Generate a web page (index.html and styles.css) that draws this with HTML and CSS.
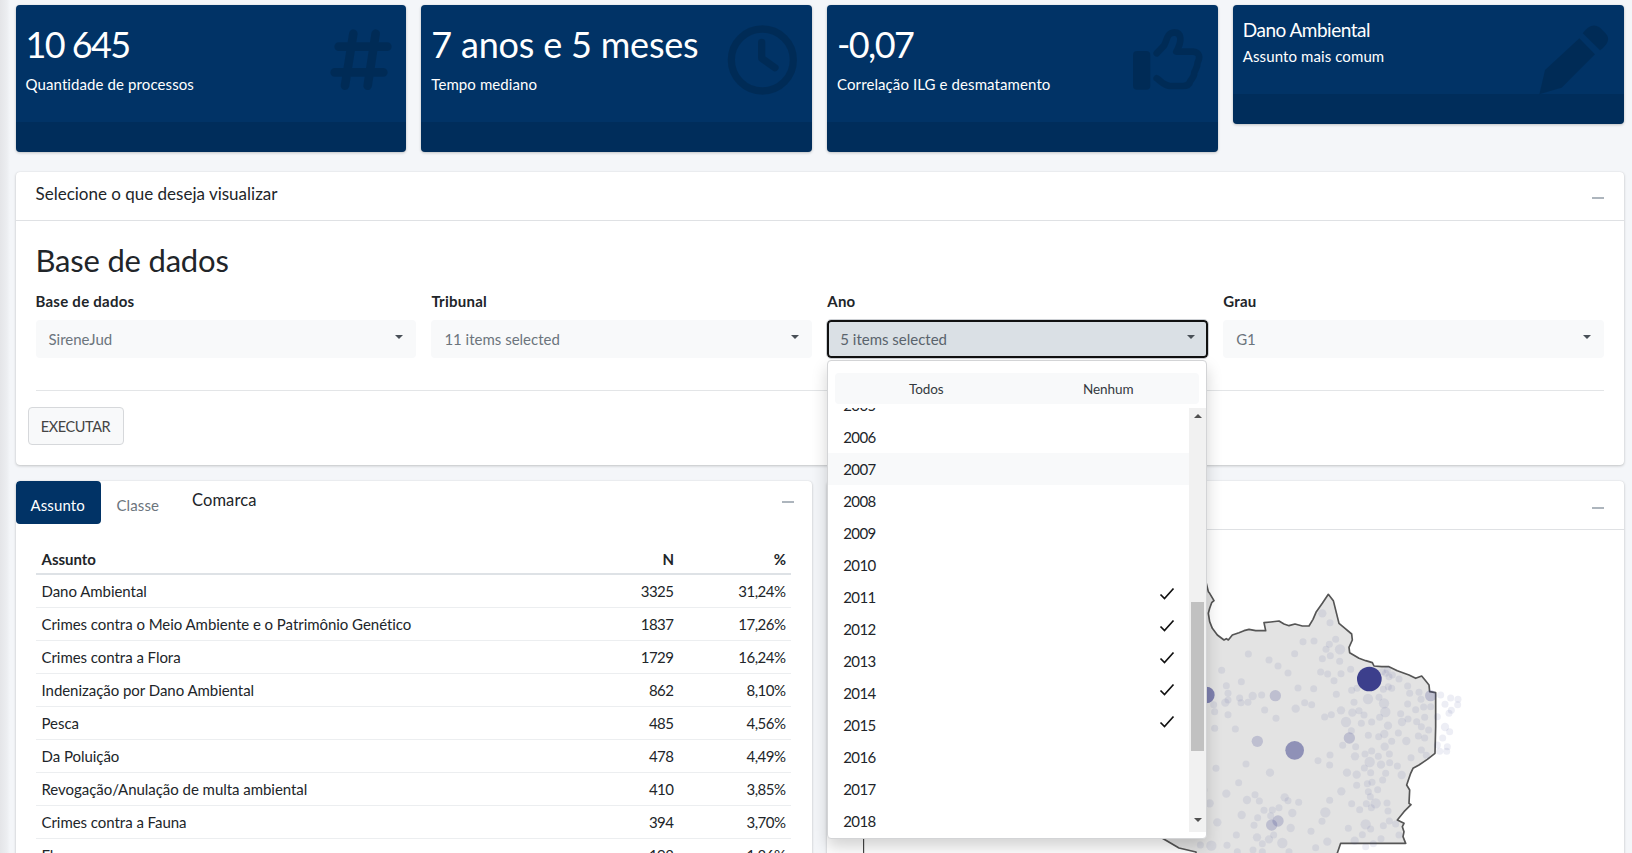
FILE: index.html
```html
<!DOCTYPE html>
<html lang="pt-BR">
  <head>
    <meta charset="UTF-8" />
    <meta name="viewport" content="width=device-width, initial-scale=1.0" />
    <title>Painel de processos</title>
    <link rel="stylesheet" href="styles.css">
  </head>
  <body>
    <div class="edge"></div>
    <main class="content">
      <section class="boxes">
        <div class="box">
          <div class="box-inner">
            <h3 class="figure">10 645</h3>
            <p>Quantidade de processos</p>
          </div>
          <svg class="box-icon icon-hash" viewBox="0 0 270 270"><g fill="none" stroke-width="26" stroke-linecap="round"><path d="M100 56 75 212M167 56 143 212M56 95H202M44 172H190"/></g></svg>
          <div class="box-foot"></div>
        </div>
        <div class="box">
          <div class="box-inner">
            <h3>7 anos e 5 meses</h3>
            <p>Tempo mediano</p>
          </div>
          <svg class="box-icon icon-clock" viewBox="0 0 270 270"><g fill="none" stroke-width="22" stroke-linecap="round" stroke-linejoin="round"><circle cx="127" cy="135" r="93"/><path d="M125 82V130L165 158"/></g></svg>
          <div class="box-foot"></div>
        </div>
        <div class="box">
          <div class="box-inner">
            <h3 class="figure">-0,07</h3>
            <p>Correlação ILG e desmatamento</p>
          </div>
          <svg class="box-icon icon-thumb" viewBox="0 0 270 270"><rect class="solid" x="24" y="108" width="52" height="116" rx="12"/><g fill="none" stroke-width="20" stroke-linecap="round" stroke-linejoin="round"><path d="M95 115 117 92C126 78 124 54 148 52 170 52 172 78 154 110H205C224 112 226 128 218 142 218 156 212 164 208 172 208 186 200 192 196 198 194 208 186 213 172 213H136C118 213 110 200 95 190"/></g></svg>
          <div class="box-foot"></div>
        </div>
        <div class="box box-small">
          <div class="box-inner">
            <h4>Dano Ambiental</h4>
            <p>Assunto mais comum</p>
          </div>
          <svg class="box-icon icon-pen" viewBox="0 0 270 270"><path class="solid" d="M148 70 195 118 95 218 28 238 45 165ZM158 55C175 30 195 25 212 40L228 56C242 72 232 90 210 106Z"/></svg>
          <div class="box-foot"></div>
        </div>
      </section>

      <section class="panel">
        <header class="panel-head">
          <span>Selecione o que deseja visualizar</span>
          <i class="minus"></i>
        </header>
        <div class="panel-body">
          <h2>Base de dados</h2>
          <div class="filters">
            <div class="filter">
              <label>Base de dados</label>
              <div class="select"><span>SireneJud</span><i class="caret"></i></div>
            </div>
            <div class="filter">
              <label>Tribunal</label>
              <div class="select"><span>11 items selected</span><i class="caret"></i></div>
            </div>
            <div class="filter">
              <label>Ano</label>
              <div class="select select-open"><span>5 items selected</span><i class="caret"></i></div>
              <div class="dropdown">
                <div class="actions">
                  <span>Todos</span>
                  <span>Nenhum</span>
                </div>
                <div class="list-wrap">
                  <ul class="years">
                    <li>2005</li>
                    <li>2006</li>
                    <li class="hover">2007</li>
                    <li>2008</li>
                    <li>2009</li>
                    <li>2010</li>
                    <li>2011<svg class="check" viewBox="0 0 16 16"><path d="M1.5 8.5 5.5 12.5 14.5 2.5"/></svg></li>
                    <li>2012<svg class="check" viewBox="0 0 16 16"><path d="M1.5 8.5 5.5 12.5 14.5 2.5"/></svg></li>
                    <li>2013<svg class="check" viewBox="0 0 16 16"><path d="M1.5 8.5 5.5 12.5 14.5 2.5"/></svg></li>
                    <li>2014<svg class="check" viewBox="0 0 16 16"><path d="M1.5 8.5 5.5 12.5 14.5 2.5"/></svg></li>
                    <li>2015<svg class="check" viewBox="0 0 16 16"><path d="M1.5 8.5 5.5 12.5 14.5 2.5"/></svg></li>
                    <li>2016</li>
                    <li>2017</li>
                    <li>2018</li>
                  </ul>
                  <div class="scrollbar">
                    <i class="arrow-up"></i>
                    <div class="thumb"></div>
                    <i class="arrow-down"></i>
                  </div>
                </div>
              </div>
            </div>
            <div class="filter">
              <label>Grau</label>
              <div class="select"><span>G1</span><i class="caret"></i></div>
            </div>
          </div>
          <hr />
          <button class="run">EXECUTAR</button>
        </div>
      </section>

      <section class="bottom">
        <div class="panel panel-table">
          <div class="tabs">
            <a class="tab active">Assunto</a>
            <a class="tab">Classe</a>
            <a class="tab tab-raw">Comarca</a>
            <i class="minus"></i>
          </div>
          <table>
            <thead>
              <tr><th>Assunto</th><th class="num">N</th><th class="num">%</th></tr>
            </thead>
            <tbody>
              <tr><td>Dano Ambiental</td><td class="num">3325</td><td class="num">31,24%</td></tr>
              <tr><td>Crimes contra o Meio Ambiente e o Patrimônio Genético</td><td class="num">1837</td><td class="num">17,26%</td></tr>
              <tr><td>Crimes contra a Flora</td><td class="num">1729</td><td class="num">16,24%</td></tr>
              <tr><td>Indenização por Dano Ambiental</td><td class="num">862</td><td class="num">8,10%</td></tr>
              <tr><td>Pesca</td><td class="num">485</td><td class="num">4,56%</td></tr>
              <tr><td>Da Poluição</td><td class="num">478</td><td class="num">4,49%</td></tr>
              <tr><td>Revogação/Anulação de multa ambiental</td><td class="num">410</td><td class="num">3,85%</td></tr>
              <tr><td>Crimes contra a Fauna</td><td class="num">394</td><td class="num">3,70%</td></tr>
              <tr><td>Flora</td><td class="num">198</td><td class="num">1,86%</td></tr>
            </tbody>
          </table>
        </div>
        <div class="panel panel-map">
          <header class="map-head"><i class="minus"></i></header>
          <svg class="map" viewBox="-1086 -90 2391 969">
            <path class="axis" d="M-976 -90V879"/>
            <path class="land" d="M52 70 58 95 62 100 75 122 68 128 62 145 58 160 62 185 70 205 85 225 105 240 112 236 118 240 130 225 150 218 165 212 180 208 200 212 230 212 225 188 245 186 270 183 285 192 300 197 318 192 340 198 360 198 372 178 382 155 400 130 418 103 433 122 450 190 468 205 488 222 490 240 480 262 482 278 510 295 530 302 550 308 555 318 578 320 600 320 625 332 660 345 680 355 698 348 708 360 720 375 722 395 740 398 740 500 738 580 715 598 690 615 672 625 665 640 653 675 662 690 660 730 666 734 645 755 625 780 645 790 640 800 645 815 642 830 650 850 455 850 445 879 445 920 21 920 21 876-30 864-81 834-129 828-300 800-300 70Z"/>
            <g class="dots dots-s">
              <circle cx="423" cy="188"/><circle cx="342" cy="245"/><circle cx="375" cy="243"/><circle cx="440" cy="238"/><circle cx="421" cy="253"/><circle cx="411" cy="268"/><circle cx="178" cy="282"/><circle cx="317" cy="281"/><circle cx="240" cy="300"/><circle cx="267" cy="318"/><circle cx="400" cy="296"/><circle cx="424" cy="287"/><circle cx="452" cy="304"/><circle cx="297" cy="339"/><circle cx="98" cy="331"/><circle cx="395" cy="336"/><circle cx="416" cy="342"/><circle cx="456" cy="341"/><circle cx="485" cy="328"/><circle cx="435" cy="362"/><circle cx="157" cy="365"/><circle cx="112" cy="377"/><circle cx="327" cy="384"/><circle cx="374" cy="386"/><circle cx="117" cy="400"/><circle cx="152" cy="414"/><circle cx="218" cy="405"/><circle cx="442" cy="403"/><circle cx="488" cy="391"/><circle cx="504" cy="385"/><circle cx="570" cy="412"/><circle cx="495" cy="427"/><circle cx="347" cy="428"/><circle cx="368" cy="434"/><circle cx="177" cy="427"/><circle cx="156" cy="428"/><circle cx="74" cy="434"/><circle cx="117" cy="420"/><circle cx="227" cy="450"/><circle cx="510" cy="452"/><circle cx="525" cy="465"/><circle cx="572" cy="472"/><circle cx="635" cy="461"/><circle cx="656" cy="432"/><circle cx="662" cy="400"/><circle cx="608" cy="385"/><circle cx="598" cy="380"/><circle cx="583" cy="388"/><circle cx="630" cy="357"/><circle cx="656" cy="378"/><circle cx="690" cy="397"/><circle cx="755" cy="405"/><circle cx="785" cy="414"/><circle cx="807" cy="418"/><circle cx="806" cy="434"/><circle cx="768" cy="433"/><circle cx="787" cy="451"/><circle cx="780" cy="460"/><circle cx="745" cy="470"/><circle cx="696" cy="418"/><circle cx="680" cy="449"/><circle cx="704" cy="441"/><circle cx="725" cy="440"/><circle cx="707" cy="472"/><circle cx="697" cy="500"/><circle cx="683" cy="485"/><circle cx="657" cy="477"/><circle cx="517" cy="490"/><circle cx="548" cy="486"/><circle cx="427" cy="464"/><circle cx="407" cy="471"/><circle cx="261" cy="475"/><circle cx="117" cy="464"/><circle cx="77" cy="455"/><circle cx="139" cy="507"/><circle cx="77" cy="505"/><circle cx="487" cy="512"/><circle cx="538" cy="526"/><circle cx="569" cy="530"/><circle cx="608" cy="544"/><circle cx="628" cy="519"/><circle cx="688" cy="528"/><circle cx="707" cy="534"/><circle cx="719" cy="510"/><circle cx="782" cy="515"/><circle cx="761" cy="534"/><circle cx="775" cy="560"/><circle cx="752" cy="574"/><circle cx="773" cy="574"/><circle cx="745" cy="555"/><circle cx="712" cy="586"/><circle cx="697" cy="570"/><circle cx="666" cy="593"/><circle cx="601" cy="582"/><circle cx="602" cy="608"/><circle cx="625" cy="618"/><circle cx="568" cy="589"/><circle cx="548" cy="573"/><circle cx="528" cy="582"/><circle cx="461" cy="556"/><circle cx="500" cy="560"/><circle cx="423" cy="585"/><circle cx="387" cy="602"/><circle cx="422" cy="615"/><circle cx="171" cy="612"/><circle cx="81" cy="625"/><circle cx="545" cy="638"/><circle cx="590" cy="640"/><circle cx="526" cy="624"/><circle cx="581" cy="660"/><circle cx="549" cy="667"/><circle cx="535" cy="671"/><circle cx="503" cy="676"/><circle cx="566" cy="689"/><circle cx="538" cy="695"/><circle cx="149" cy="668"/><circle cx="198" cy="704"/><circle cx="211" cy="723"/><circle cx="297" cy="722"/><circle cx="329" cy="727"/><circle cx="422" cy="721"/><circle cx="488" cy="731"/><circle cx="544" cy="710"/><circle cx="532" cy="731"/><circle cx="547" cy="743"/><circle cx="594" cy="729"/><circle cx="597" cy="753"/><circle cx="512" cy="749"/><circle cx="399" cy="784"/><circle cx="270" cy="743"/><circle cx="250" cy="750"/><circle cx="225" cy="751"/><circle cx="245" cy="767"/><circle cx="206" cy="773"/><circle cx="195" cy="796"/><circle cx="366" cy="814"/><circle cx="142" cy="825"/><circle cx="220" cy="851"/><circle cx="254" cy="825"/><circle cx="114" cy="856"/><circle cx="34" cy="855"/><circle cx="478" cy="805"/><circle cx="545" cy="807"/><circle cx="583" cy="797"/><circle cx="601" cy="783"/><circle cx="620" cy="792"/><circle cx="520" cy="824"/><circle cx="576" cy="836"/><circle cx="380" cy="863"/><circle cx="553" cy="851"/><circle cx="630" cy="825"/><circle cx="45" cy="690"/><circle cx="300" cy="875"/><circle cx="192" cy="870"/><circle cx="145" cy="875"/><circle cx="220" cy="875"/><circle cx="530" cy="860"/><circle cx="600" cy="350"/><circle cx="580" cy="335"/><circle cx="610" cy="345"/><circle cx="595" cy="330"/><circle cx="590" cy="340"/>
            </g>
            <g class="dots dots-m">
              <circle cx="400" cy="160"/><circle cx="191" cy="408"/><circle cx="109" cy="428"/><circle cx="320" cy="446"/><circle cx="456" cy="451"/><circle cx="490" cy="458"/><circle cx="638" cy="645"/><circle cx="597" cy="497"/><circle cx="639" cy="486"/><circle cx="586" cy="522"/><circle cx="652" cy="543"/><circle cx="768" cy="501"/><circle cx="576" cy="614"/><circle cx="498" cy="589"/><circle cx="587" cy="560"/><circle cx="243" cy="638"/><circle cx="474" cy="638"/><circle cx="503" cy="644"/><circle cx="457" cy="694"/><circle cx="112" cy="701"/><circle cx="174" cy="720"/><circle cx="287" cy="712"/><circle cx="310" cy="759"/><circle cx="158" cy="765"/><circle cx="85" cy="787"/><circle cx="305" cy="804"/><circle cx="204" cy="832"/><circle cx="240" cy="838"/><circle cx="497" cy="842"/><circle cx="415" cy="845"/><circle cx="62" cy="730"/>
            </g>
            <g class="dots dots-l">
              <circle cx="453" cy="268"/><circle cx="537" cy="417"/><circle cx="585" cy="430"/><circle cx="589" cy="456"/><circle cx="471" cy="486"/><circle cx="542" cy="606"/><circle cx="560" cy="730"/><circle cx="409" cy="757"/><circle cx="530" cy="793"/><circle cx="280" cy="849"/><circle cx="67" cy="857"/>
            </g>
            <g class="dots dots-xl">
              <circle cx="259" cy="407"/><circle cx="205" cy="544"/><circle cx="481" cy="534"/><circle cx="725" cy="407"/><circle cx="267" cy="783"/><circle cx="248" cy="795"/>
            </g>
            <circle class="dot-city" cx="317" cy="571" r="28"/>
            <circle class="dot-state" cx="52" cy="405" r="25"/>
            <circle class="dot-top" cx="541" cy="357" r="37"/>
          </svg>
        </div>
      </section>
    </main>
  </body>
</html>
```

FILE: styles.css
```css
* {
  box-sizing: border-box;
}
html, body {
  height: 853px;
  overflow: hidden;
}
body {
  display: flex;
  margin: 0;
  background: #f4f6f9;
  color: #212529;
  font-family: Lato, "Noto Sans", sans-serif;
  font-size: 15px;
}
.edge {
  width: 10px;
  flex: none;
  background: linear-gradient(to right, #e4e5e8, #eceef1 70%, #f4f6f9);
}
.content {
  flex: 1;
  padding: 5px 8.5px 0 5.5px;
  min-width: 0;
}

/* caixas do topo */
.boxes {
  display: grid;
  grid-template-columns: repeat(4, 1fr);
  gap: 15px;
  align-items: start;
  margin-bottom: 20px;
}
.box {
  position: relative;
  height: 147px;
  display: flex;
  flex-direction: column;
  background: #013366;
  color: #fff;
  border-radius: 4px;
  box-shadow: 0 0 1px rgba(0, 0, 0, .125), 0 1px 3px rgba(0, 0, 0, .2);
  overflow: hidden;
}
.box-small {
  height: 119px;
}
.box-inner {
  flex: 1;
  padding: 21px 10px 0;
}
.box-small .box-inner {
  padding-top: 14px;
}
.box h3 {
  margin: 0 0 12px;
  font-size: 36px;
  font-weight: 400;
  line-height: 36px;
  letter-spacing: -.2px;
}
.box h3.figure {
  letter-spacing: -1.6px;
}
.box h4 {
  margin: 0 0 5px;
  font-size: 19px;
  font-weight: 400;
  line-height: 22px;
  letter-spacing: -.5px;
}
.box p {
  margin: 0;
  font-size: 15px;
  line-height: 20px;
  letter-spacing: .1px;
}
.box-foot {
  height: 30px;
  background: rgba(0, 0, 0, .1);
}
.box-icon {
  position: absolute;
  top: 10px;
  width: 90px;
  height: 90px;
  stroke: rgba(0, 0, 0, .15);
}
.icon-hash {
  right: -4px;
}
.icon-clock {
  right: 2px;
}
.icon-thumb {
  right: 3px;
}
.icon-pen {
  right: 4px;
}
.box-icon .solid {
  fill: rgba(0, 0, 0, .15);
  stroke: none;
}

/* paineis */
.panel {
  background: #fff;
  border-radius: 4px;
  box-shadow: 0 0 1px rgba(0, 0, 0, .125), 0 1px 3px rgba(0, 0, 0, .2);
}
.panel-head {
  display: flex;
  justify-content: space-between;
  align-items: center;
  height: 49px;
  padding: 0 20px 6px 20px;
  border-bottom: 1px solid #dfe1e4;
  font-size: 17px;
}
.panel-head .minus {
  margin-top: 10px;
}
.minus {
  display: block;
  width: 12px;
  height: 2px;
  margin-top: 6px;
  background: #adb5bd;
}
.panel-body {
  height: 244px;
  padding: 21px 20px 0 20px;
}
.panel-body h2 {
  margin: 0 0 14px;
  font-size: 31px;
  font-weight: 400;
  line-height: 36px;
  letter-spacing: -.2px;
}
.filters {
  display: grid;
  grid-template-columns: repeat(4, 1fr);
  gap: 15.5px;
}
.filter {
  position: relative;
}
.filter label {
  display: block;
  margin-bottom: 10px;
  font-size: 15px;
  font-weight: 700;
  line-height: 18px;
  letter-spacing: .25px;
}
.select {
  display: flex;
  justify-content: space-between;
  align-items: center;
  height: 38px;
  padding: 0 13px;
  background: #f8f9fa;
  border-radius: 4px;
  color: #6c757d;
  font-size: 15px;
}
.select-open {
  background: #dae0e5;
  border: 2px solid #111;
  outline: 1px solid #cdd0d4;
  padding: 0 11px;
  color: #59636c;
}
.caret {
  display: block;
  margin-top: -4px;
  border-top: 4px solid #495057;
  border-left: 4px solid transparent;
  border-right: 4px solid transparent;
}
hr {
  height: 1px;
  margin: 32px 0 16px;
  border: 0;
  background: #e3e5e7;
}
.run {
  display: block;
  margin-left: -8px;
  width: 96px;
  height: 38px;
  padding: 0;
  background: #f8f9fa;
  border: 1px solid #d6d8db;
  border-radius: 4px;
  color: #444;
  font-family: inherit;
  font-size: 14.5px;
  letter-spacing: -.4px;
}

/* dropdown do ano */
.dropdown {
  position: absolute;
  z-index: 10;
  top: 68px;
  left: 0;
  width: 380px;
  height: 479px;
  padding-top: 12px;
  background: #fff;
  border: 1px solid #d3d4d6;
  border-radius: 4px;
  box-shadow: 0 8px 16px rgba(0, 0, 0, .175);
  overflow: hidden;
}
.actions {
  display: grid;
  grid-template-columns: 1fr 1fr;
  height: 31px;
  margin: 0 7px;
  background: #f8f9fa;
  border-radius: 4px;
  align-items: center;
  text-align: center;
  font-size: 13.5px;
  letter-spacing: -.1px;
  color: #343a40;
}
.list-wrap {
  display: flex;
  height: 432px;
  margin-top: 4px;
  overflow: hidden;
}
.years {
  flex: 1;
  margin: -19px 0 0;
  padding: 0;
  list-style: none;
}
.years li {
  display: flex;
  justify-content: space-between;
  align-items: center;
  height: 32px;
  padding: 0 14px 0 15px;
  font-size: 15px;
  letter-spacing: -.6px;
}
.years .hover {
  background: #f8f9fa;
}
.check {
  width: 16px;
  height: 16px;
  margin-top: -7px;
  fill: none;
  stroke: #111;
  stroke-width: 1.7;
}
.scrollbar {
  display: flex;
  flex-direction: column;
  align-items: center;
  width: 17px;
  height: 424px;
  background: #f1f1f1;
}
.arrow-up, .arrow-down {
  display: block;
  border-left: 4px solid transparent;
  border-right: 4px solid transparent;
}
.arrow-up {
  margin-top: 6px;
  border-bottom: 4px solid #505050;
}
.arrow-down {
  margin-top: 67px;
  border-top: 4px solid #505050;
}
.thumb {
  width: 13px;
  height: 149px;
  margin-top: 184px;
  background: #c1c1c1;
}

/* parte de baixo */
.bottom {
  display: grid;
  grid-template-columns: 1fr 1fr;
  gap: 15px;
  margin-top: 16px;
  align-items: start;
}
.panel-table, .panel-map {
  height: 400px;
  overflow: hidden;
}
.tabs {
  display: flex;
  align-items: flex-start;
  height: 43px;
}
.tab {
  padding: 15px 15px 0;
  height: 43px;
  border-radius: 4px;
  color: #6c757d;
  font-size: 15px;
  letter-spacing: .1px;
}
.tab.active {
  width: 85px;
  padding-left: 15px;
  background: #013366;
  color: #fff;
}
.tab:nth-child(2) {
  padding-left: 16px;
}
.tab-raw {
  padding: 9px 0 0 18px;
  color: #212529;
  font-size: 16.5px;
  letter-spacing: .1px;
}
.tabs .minus {
  margin: 20px 18px 0 auto;
}
table {
  width: 755px;
  margin: 13px 0 0 20px;
  border-collapse: collapse;
  font-size: 15px;
  letter-spacing: -.04px;
}
th, td {
  padding: 0 6px;
  text-align: left;
}
th {
  height: 37px;
  padding-top: 8px;
  border-bottom: 2px solid #dee2e6;
  font-weight: 700;
}
td {
  height: 33px;
  border-bottom: 1px solid #eceef0;
}
.num {
  text-align: right;
  letter-spacing: -.5px;
}
th.num:nth-child(2), td.num:nth-child(2) {
  width: 100px;
  padding-right: 5px;
}
th.num:nth-child(3), td.num:nth-child(3) {
  width: 112px;
  padding-right: 5px;
}
.map-head {
  display: flex;
  justify-content: flex-end;
  align-items: center;
  height: 49px;
  padding-right: 20px;
  border-bottom: 1px solid #dfe1e4;
}
.map {
  display: block;
  width: 797px;
  height: 323px;
}
.axis {
  stroke: #222;
  stroke-width: 3;
}
.land {
  fill: #e3e3e3;
  stroke: #555;
  stroke-width: 5;
  stroke-linejoin: round;
}
.dots circle {
  fill: rgba(60, 63, 140, .09);
}
.dots-s circle {
  r: 10.5px;
}
.dots-m circle {
  r: 12.5px;
}
.dots-l circle {
  r: 15.5px;
}
.dots-xl circle {
  r: 17px;
  fill: rgba(60, 63, 140, .22);
}
.dot-city {
  fill: rgba(60, 63, 140, .5);
}
.dot-state {
  fill: rgba(60, 63, 140, .6);
}
.dot-top {
  fill: #3c3f8c;
}
```
